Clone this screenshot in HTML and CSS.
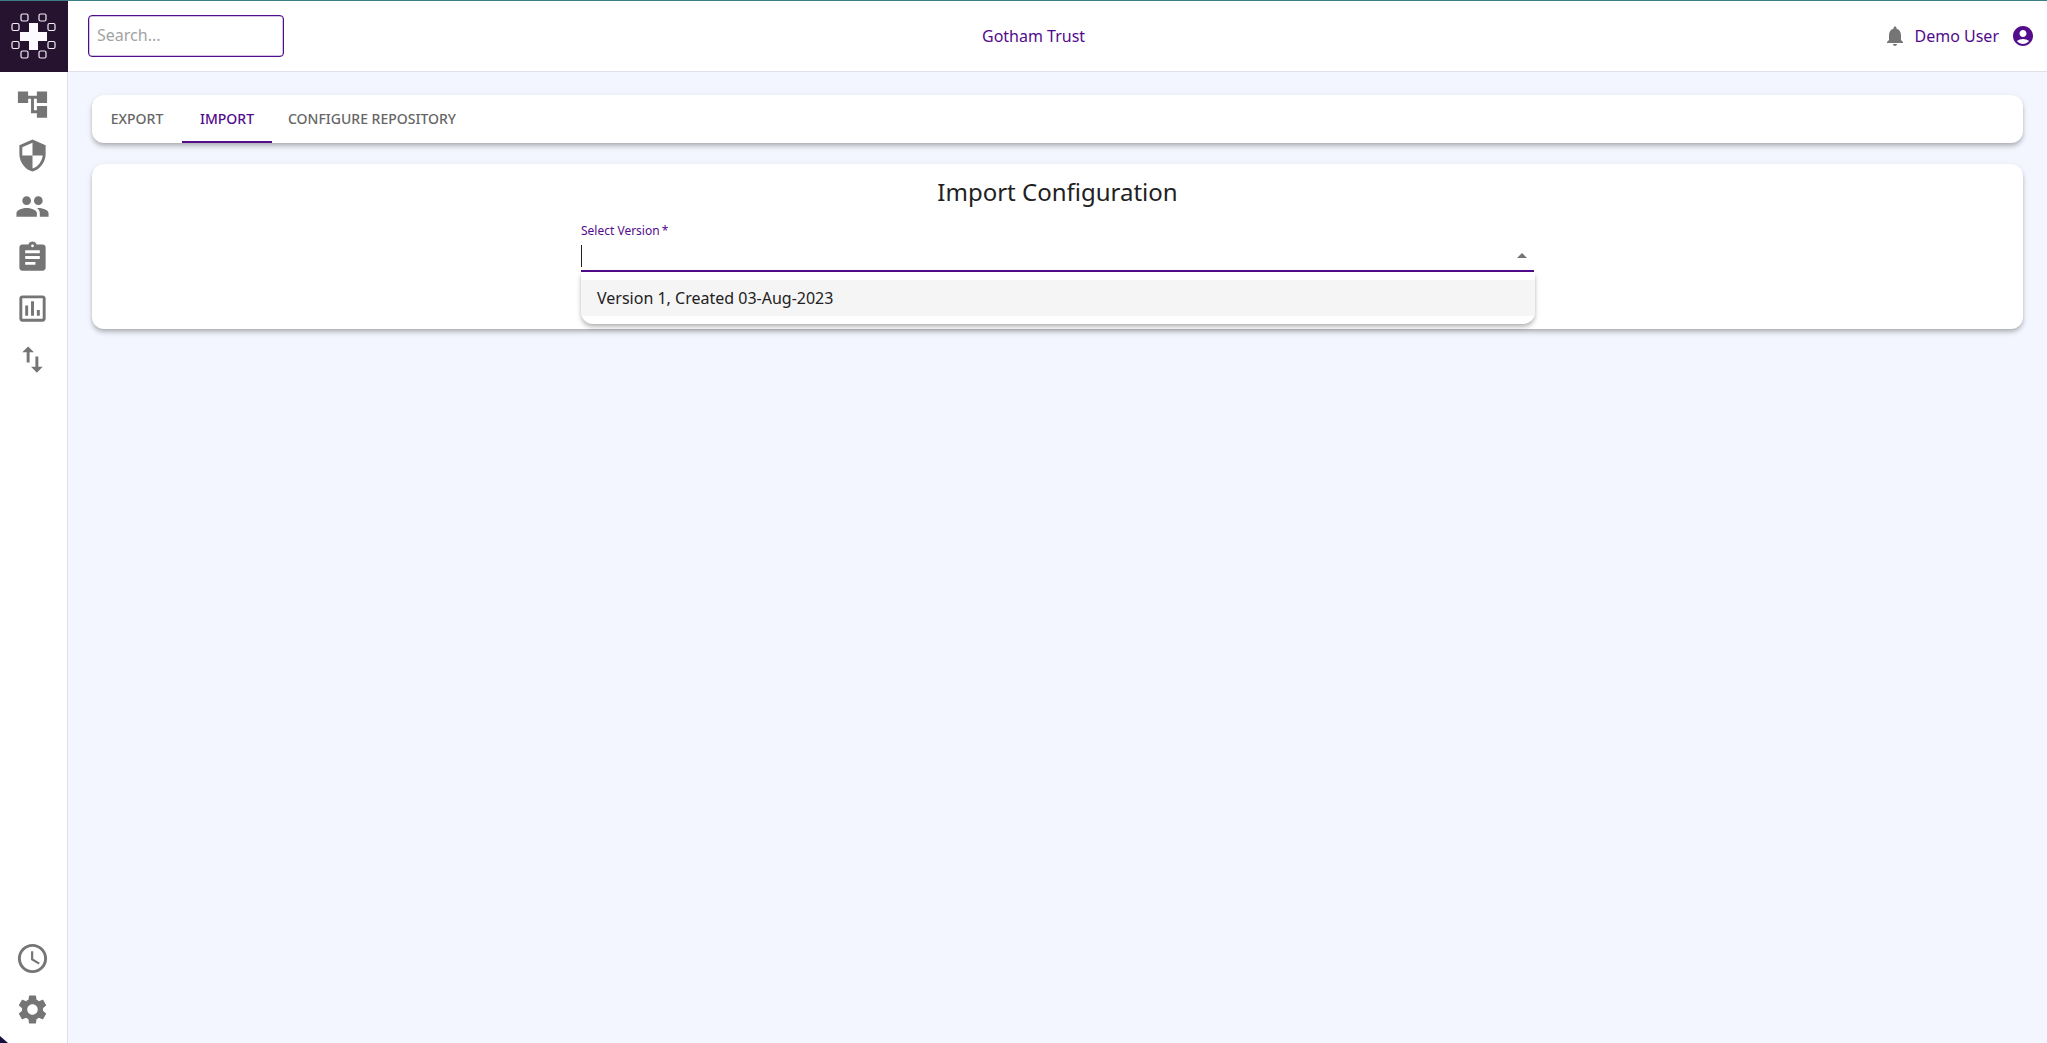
FILE: index.html
```html
<!DOCTYPE html>
<html lang="en">
<head>
<meta charset="utf-8">
<title>Import Configuration</title>
<link rel="stylesheet" href="styles.css">
</head>
<body>
<div class="app">
  <header class="topbar">
    <div class="logo">
      <svg width="68" height="71" viewBox="0 0 68 71">
        <path class="logo-plus" d="M29 22h9v9h9v9h-9v9h-9v-9h-9v-9h9z"/>
        <g class="logo-cells">
          <rect x="21" y="13" width="7" height="7" rx="1.500"/>
          <rect x="39" y="13" width="7" height="7" rx="1.500"/>
          <rect x="12" y="22.500" width="7" height="7" rx="1.500"/>
          <rect x="48" y="22.500" width="7" height="7" rx="1.500"/>
          <rect x="12" y="40.500" width="7" height="7" rx="1.500"/>
          <rect x="48" y="40.500" width="7" height="7" rx="1.500"/>
          <rect x="21" y="50" width="7" height="7" rx="1.500"/>
          <rect x="39" y="50" width="7" height="7" rx="1.500"/>
        </g>
      </svg>
    </div>
    <div class="topbar-content">
      <div class="search">Search...</div>
      <div class="org">Gotham Trust</div>
      <div class="user">
        <svg class="bell" width="24" height="24" viewBox="0 0 24 24"><path d="M12 22c1.100 0 2-.9 2-2h-4c0 1.100.9 2 2 2zm6-6v-5c0-3.070-1.640-5.640-4.500-6.320V4c0-.83-.67-1.500-1.500-1.500s-1.500.67-1.500 1.500v.68C7.630 5.360 6 7.920 6 11v5l-2 2v1h16v-1l-2-2z"/></svg>
        <span class="user-name">Demo User</span>
        <svg class="avatar" width="24" height="24" viewBox="0 0 24 24"><path d="M12 2C6.480 2 2 6.480 2 12s4.480 10 10 10 10-4.480 10-10S17.520 2 12 2zm0 4c1.930 0 3.500 1.570 3.500 3.500S13.930 13 12 13s-3.500-1.570-3.500-3.500S10.070 6 12 6zm0 14c-2.030 0-4.430-.82-6.140-2.880C7.550 15.800 9.680 15 12 15s4.450.8 6.140 2.120C16.430 19.180 14.030 20 12 20z"/></svg>
      </div>
    </div>
  </header>
  <div class="body-row">
    <nav class="sidebar">
      <div class="nav-group">
        <a class="nav-item"><svg width="35" height="35" viewBox="0 0 24 24"><path d="M22 11V3h-7v3H9V3H2v8h7V8h2v10h4v3h7v-8h-7v3h-2V8h2v3z"/></svg></a>
        <a class="nav-item"><svg width="35" height="35" viewBox="0 0 24 24"><path d="M12 1 3 5v6c0 5.550 3.840 10.740 9 12 5.160-1.260 9-6.450 9-12V5l-9-4zm0 10.990h7c-.53 4.120-3.280 7.790-7 8.940V12H5V6.300l7-3.110v8.800z"/></svg></a>
        <a class="nav-item"><svg width="35" height="35" viewBox="0 0 24 24"><path d="M16 11c1.660 0 2.990-1.340 2.990-3S17.660 5 16 5s-3 1.340-3 3 1.340 3 3 3zm-8 0c1.660 0 2.990-1.340 2.990-3S9.660 5 8 5 5 6.340 5 8s1.340 3 3 3zm0 2c-2.330 0-7 1.170-7 3.500V19h14v-2.500c0-2.330-4.670-3.500-7-3.500zm8 0c-.29 0-.62.020-.97.050 1.160.84 1.970 1.970 1.970 3.450V19h6v-2.500c0-2.330-4.670-3.500-7-3.500z"/></svg></a>
        <a class="nav-item"><svg width="35" height="35" viewBox="0 0 24 24"><path d="M19 3h-4.180C14.400 1.840 13.300 1 12 1c-1.300 0-2.400.84-2.820 2H5c-1.100 0-2 .9-2 2v14c0 1.100.9 2 2 2h14c1.100 0 2-.9 2-2V5c0-1.100-.9-2-2-2zm-7 0c.55 0 1 .45 1 1s-.45 1-1 1-1-.45-1-1 .45-1 1-1zm2 14H7v-2h7v2zm3-4H7v-2h10v2zm0-4H7V7h10v2z"/></svg></a>
        <a class="nav-item"><svg width="35" height="35" viewBox="0 0 24 24"><path d="M19 3H5c-1.100 0-2 .9-2 2v14c0 1.100.9 2 2 2h14c1.100 0 2-.9 2-2V5c0-1.100-.9-2-2-2zm0 16H5V5h14v14zM7 10h2v7H7zm4-3h2v10h-2zm4 6h2v4h-2z"/></svg></a>
        <a class="nav-item"><svg width="35" height="35" viewBox="0 0 24 24"><path d="M16 17.010V10h-2v7.010h-3L15 21l4-3.990h-3zM9 3 5 6.990h3V14h2V6.990h3L9 3z"/></svg></a>
      </div>
      <div class="nav-group">
        <a class="nav-item"><svg width="35" height="35" viewBox="0 0 24 24"><path d="M11.990 2C6.470 2 2 6.480 2 12s4.470 10 9.990 10C17.520 22 22 17.520 22 12S17.520 2 11.990 2zM12 20c-4.420 0-8-3.580-8-8s3.580-8 8-8 8 3.580 8 8-3.580 8-8 8zm.5-13H11v6l5.250 3.150.75-1.230-4.500-2.670z"/></svg></a>
        <a class="nav-item"><svg width="35" height="35" viewBox="0 0 24 24"><path d="M19.140 12.940c.04-.3.060-.61.060-.94 0-.32-.02-.64-.07-.94l2.030-1.580c.18-.14.230-.41.120-.61l-1.920-3.320c-.12-.22-.37-.29-.59-.22l-2.390.96c-.5-.38-1.030-.7-1.620-.94l-.36-2.540c-.04-.24-.24-.41-.48-.41h-3.840c-.24 0-.43.170-.47.410l-.36 2.540c-.59.240-1.130.570-1.620.94l-2.390-.96c-.22-.08-.47 0-.59.220L2.740 8.870c-.12.210-.08.470.12.610l2.030 1.580c-.05.300-.09.630-.09.940s.02.640.07.940l-2.030 1.580c-.18.140-.23.410-.12.610l1.920 3.320c.12.220.37.290.59.220l2.390-.96c.5.380 1.030.7 1.620.94l.36 2.540c.05.240.24.410.48.410h3.840c.24 0 .44-.17.47-.41l.36-2.540c.59-.24 1.130-.56 1.620-.94l2.390.96c.22.080.47 0 .59-.22l1.920-3.320c.12-.22.070-.47-.12-.61l-2.010-1.580zM12 15.600c-1.980 0-3.600-1.620-3.600-3.600s1.620-3.600 3.600-3.600 3.600 1.620 3.600 3.600-1.620 3.600-3.600 3.600z"/></svg></a>
      </div>
    </nav>
    <main class="content">
      <div class="card tabs">
        <div class="tab">EXPORT</div>
        <div class="tab tab-active">IMPORT</div>
        <div class="tab">CONFIGURE REPOSITORY</div>
      </div>
      <section class="card panel">
        <h1 class="panel-title">Import Configuration</h1>
        <div class="field">
          <div class="field-label">Select Version&#8201;*</div>
          <div class="field-input">
            <span class="caret"></span>
            <svg class="arrow" width="24" height="24" viewBox="0 0 24 24"><path d="m7 15 5-5 5 5z"/></svg>
          </div>
          <div class="menu">
            <div class="menu-item">Version 1, Created 03-Aug-2023</div>
          </div>
        </div>
      </section>
    </main>
  </div>
  <div class="corner-mark"></div>
</div>
</body>
</html>
```
FILE: styles.css
```css
* { box-sizing: border-box; }
html, body { margin: 0; height: 100%; }
body {
  font-family: "Noto Sans", "Open Sans", sans-serif;
  background: #f3f6fe;
  color: #212121;
  overflow: hidden;
}
.app { position: relative; display: flex; flex-direction: column; height: 1043px; }
.corner-mark {
  position: absolute;
  left: 0;
  bottom: 0;
  width: 8px;
  height: 7px;
  background: #1a1040;
  clip-path: polygon(0 0, 100% 100%, 0 100%);
}
.topbar {
  display: flex;
  height: 72px;
  flex: none;
  background: #fff;
  border-top: 1px solid #3a7f85;
  border-bottom: 1px solid #dfe1e8;
}
.logo {
  width: 68px;
  height: 71px;
  flex: none;
  background: #26132f;
}
.logo svg { display: block; }
.logo-plus { fill: #fcfaff; }
.logo-cells rect { fill: none; stroke: #f4eef8; stroke-width: 1.200; }
.topbar-content {
  flex: 1;
  display: flex;
  align-items: center;
  padding: 0 12px 0 20px;
}
.search {
  width: 196px;
  height: 42px;
  flex: none;
  border: 1px solid #520c8c;
  border-radius: 4px;
  box-shadow: inset 0 0 0 .5px rgba(82,12,140,.5);
  padding: 0 8px;
  font-size: 16px;
  line-height: 38px;
  color: #a3a3a3;
}
.org { font-size: 16px; color: #520c8c; margin-left: 698px; }
.user { display: flex; align-items: center; margin-left: auto; color: #520c8c; }
.bell { fill: #757575; margin-right: 8px; }
.user-name { font-size: 16px; margin-right: 12px; }
.avatar { fill: #520c8c; }
.body-row { flex: 1; display: flex; min-height: 0; }
.sidebar {
  width: 68px;
  flex: none;
  background: #fff;
  border-right: 1px solid #dfe1e8;
  display: flex;
  flex-direction: column;
  justify-content: space-between;
  padding: 15px 2px 16px 0;
}
.nav-group { display: flex; flex-direction: column; gap: 16px; }
.nav-item { display: flex; justify-content: center; height: 35px; }
.nav-item svg { fill: #757575; }
.content { flex: 1; padding: 23px 24px 0 24px; display: flex; flex-direction: column; gap: 21px; }
.card {
  background: #fff;
  border-radius: 12px;
  box-shadow: 0 2px 4px -1px rgba(0,0,0,.2), 0 4px 5px 0 rgba(0,0,0,.14), 0 1px 10px 0 rgba(0,0,0,.04);
}
.tabs { display: flex; height: 48px; flex: none; overflow: hidden; }
.tab {
  min-width: 90px;
  padding: 0 16px;
  font-size: 14px;
  font-weight: 500;
  line-height: 48px;
  text-align: center;
  color: #666;
}
.tab-active { color: #520c8c; border-bottom: 2px solid #520c8c; }
.panel { height: 165px; flex: none; padding-top: 10px; }
.panel-title {
  margin: 0;
  font-size: 24px;
  font-weight: 400;
  line-height: 36px;
  text-align: center;
  color: #212121;
}
.field { position: relative; width: 953px; margin: 12px auto 0; }
.field-label { font-size: 12px; line-height: 18px; color: #520c8c; }
.field-input {
  position: relative;
  height: 30px;
  margin-top: 2px;
  border-bottom: 2px solid #520c8c;
  padding-top: 3px;
}
.caret { display: block; width: 1px; height: 22px; background: #212121; }
.arrow { position: absolute; right: 0; top: 1px; fill: #757575; }
.menu {
  position: absolute;
  left: 0;
  right: -1px;
  top: 50px;
  height: 52px;
  padding: 8px 0;
  background: #fff;
  border-radius: 0 0 12px 12px;
  box-shadow: 0 2px 4px -1px rgba(0,0,0,.2), 0 4px 5px 0 rgba(0,0,0,.14), 0 1px 10px 0 rgba(0,0,0,.04);
}
.menu-item {
  height: 36px;
  padding: 0 12px 0 16px;
  background: #f5f5f5;
  font-size: 16px;
  line-height: 36px;
  color: #212121;
}
```
